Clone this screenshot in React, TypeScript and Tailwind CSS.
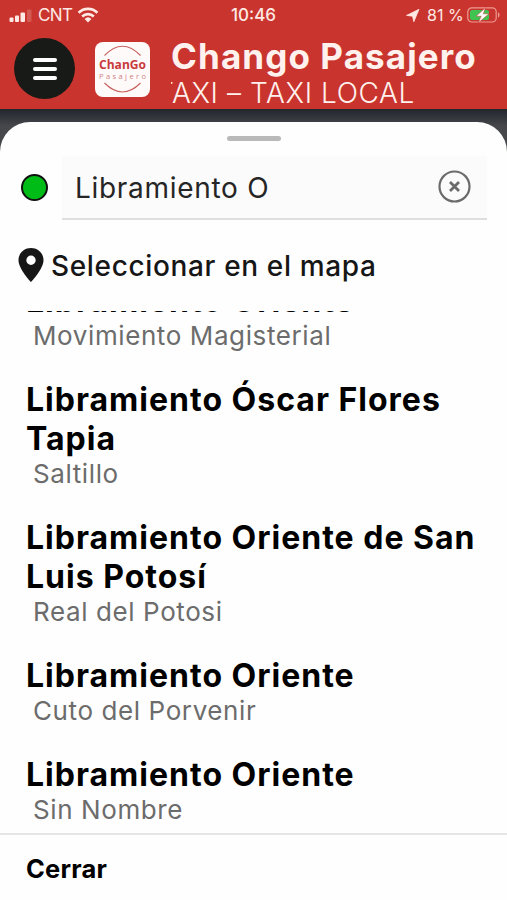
type Place = { lines: string[]; area: string };

const places: Place[] = [
  { lines: ["Libramiento Oriente"], area: "Movimiento Magisterial" },
  { lines: ["Libramiento Óscar Flores", "Tapia"], area: "Saltillo" },
  { lines: ["Libramiento Oriente de San", "Luis Potosí"], area: "Real del Potosi" },
  { lines: ["Libramiento Oriente"], area: "Cuto del Porvenir" },
  { lines: ["Libramiento Oriente"], area: "Sin Nombre" },
];

function StatusBar() {
  return (
    <div className="flex h-[30px] items-center pl-[9px] pr-[6px] text-[#ffe9e4]">
      <div className="flex w-[215px] items-center">
        <svg className="mt-[2px]" width="24" height="14" viewBox="0 0 24 14" fill="currentColor">
          <rect x="0.5" y="8.5" width="4" height="4.5" rx="1" />
          <rect x="6" y="6.5" width="4" height="6.5" rx="1" />
          <rect x="11.5" y="3.5" width="4.5" height="9.5" rx="1" />
          <rect x="18" y="0.5" width="4.5" height="12.5" rx="1" opacity="0.2" />
        </svg>
        <span className="ml-[5px] w-[35px] whitespace-nowrap pt-[2px] text-[17px] tracking-[-0.6px]">CNT</span>
        <svg className="ml-[4px]" width="22" height="16" viewBox="0 0 22 16" fill="none" stroke="currentColor" strokeWidth="2.7">
          <path d="M1.6 5.8a13.4 13.4 0 0 1 18.8 0" />
          <path d="M5.2 9.4a8.4 8.4 0 0 1 11.6 0" />
          <path d="M11 15.4 7.6 11.9a5 5 0 0 1 6.8 0Z" fill="currentColor" stroke="none" />
        </svg>
      </div>
      <span className="ml-[7px] w-[61px] whitespace-nowrap pt-[2px] text-[17px] font-medium">10:46</span>
      <svg className="ml-[114px]" width="14" height="13" viewBox="0 0 14 13" fill="currentColor">
        <path d="M13 .3 7.8 12.7 6.6 7.2.6 6.4Z" stroke="currentColor" strokeWidth="0.8" strokeLinejoin="round" />
      </svg>
      <span className="ml-[7px] w-[37px] whitespace-nowrap text-[16px]">81 %</span>
      <svg className="ml-[3px]" width="34" height="16" viewBox="0 0 34 16">
        <rect x="0.8" y="0.8" width="28.4" height="14.2" rx="4" fill="none" stroke="#ee9a92" strokeWidth="1.2" />
        <rect x="3" y="3" width="19" height="10" rx="2" fill="#3fc351" />
        <path d="M31 5.2c2 .8 2 4.6 0 5.4Z" fill="#ee9a92" />
        <path d="M18.5.8 9 9.2h5.2l-2.9 6.5L22 6.8h-5.7Z" fill="#fff" stroke="#c8352e" strokeWidth="0.5" />
      </svg>
    </div>
  );
}

function Logo() {
  return (
    <svg className="ml-[20px] shrink-0" width="55" height="55" viewBox="0 0 55 55">
      <rect width="55" height="55" rx="8" fill="#fffafa" />
      <g fill="none" stroke="#c9625f" strokeWidth="1.1">
        <path d="M9.5 13.5Q27.5-5 45.5 13.5" />
        <path d="M9.5 41Q27.5 59 45.5 41" />
      </g>
      <text x="4" y="27" textLength="47" lengthAdjust="spacingAndGlyphs" fontFamily="'Open Sans', sans-serif" fontSize="12.5" fontWeight="700" fill="#c83a3c">ChanGo</text>
      <text x="4" y="37" textLength="47" fontFamily="'Open Sans', sans-serif" fontSize="7.5" fill="#cf8284">Pasajero</text>
    </svg>
  );
}

function Header() {
  return (
    <header className="h-[109px] bg-[#c9352e]">
      <StatusBar />
      <div className="flex pl-[14px] pt-[8px]">
        <button className="flex h-[61px] w-[61px] shrink-0 flex-col items-center justify-center gap-[5px] rounded-full bg-[#181a17]">
          <span className="h-[4px] w-[24px] rounded-full bg-white" />
          <span className="h-[4px] w-[24px] rounded-full bg-white" />
          <span className="h-[4px] w-[24px] rounded-full bg-white" />
        </button>
        <div className="flex pt-[4px]">
          <Logo />
        </div>
        <div className="ml-[21px] text-[#fff1ed]">
          <h1 className="h-[38px] whitespace-nowrap text-[35px] font-bold leading-[37px] tracking-[1.1px]">Chango Pasajero</h1>
          <div className="flex h-[34px] w-[300px] overflow-hidden">
            <p className="-ml-[15px] whitespace-nowrap text-[28px] font-light leading-[34px] tracking-[0.6px]">TAXI – TAXI LOCAL</p>
          </div>
        </div>
      </div>
    </header>
  );
}

function SearchField() {
  return (
    <div className="flex h-[64px] items-center pl-[21px]">
      <span className="mb-[2px] h-[27px] w-[27px] rounded-full border-2 border-[#111] bg-[#00bc16]" />
      <div className="ml-[14px] flex h-full w-[425px] items-center justify-between border-b-2 border-[#dedede] bg-[#fbfbfb] pl-[13px] pr-[16px]">
        <span className="whitespace-nowrap pt-[2px] text-[28px] tracking-[0.7px] text-[#252525]">Libramiento O</span>
        <svg className="mb-[2px]" width="33" height="33" viewBox="0 0 33 33" fill="none" stroke="#6b6b6b">
          <circle cx="16.5" cy="16.5" r="15" strokeWidth="2.2" />
          <path d="m12 12 9 9m0-9-9 9" strokeWidth="2.8" />
        </svg>
      </div>
    </div>
  );
}

function PlaceItem({ place }: { place: Place }) {
  return (
    <li className="pb-[24px]">
      <div className="pt-[1px] text-[32px] font-bold leading-[39px] tracking-[1px] text-black">
        {place.lines.map((line) => (
          <div key={line} className="whitespace-nowrap">{line}</div>
        ))}
      </div>
      <div className="h-[35px] whitespace-nowrap pl-[7px] text-[26px] leading-[31px] tracking-[0.6px] text-[#6c6c6c]">{place.area}</div>
    </li>
  );
}

export default function App() {
  return (
    <div className="flex h-[900px] w-[507px] flex-col overflow-hidden bg-gradient-to-b from-[#20242b] from-12% to-[#45474b] to-14% font-['Inter',sans-serif]">
      <Header />
      <main className="mt-[13px] flex min-h-0 flex-1 flex-col rounded-t-[30px] bg-[#fefefe]">
        <div className="flex h-[34px] justify-center pt-[14px]">
          <span className="h-[5px] w-[54px] rounded-full bg-[#b9b9b9]" />
        </div>
        <SearchField />
        <div className="mt-[20px] flex h-[50px] items-center pl-[18px]">
          <svg width="26" height="34" viewBox="0 0 26 34" fill="#161616">
            <path fillRule="evenodd" d="M13 0C5.8 0 .5 5.3.5 12.2.5 21 13 34 13 34s12.5-13 12.5-21.8C25.5 5.3 20.2 0 13 0Zm0 7.6a4.7 4.7 0 1 1 0 9.4 4.7 4.7 0 0 1 0-9.4Z" />
          </svg>
          <span className="ml-[7px] whitespace-nowrap pt-[1px] text-[28px] font-medium tracking-[0.65px] text-[#161616]">Seleccionar en el mapa</span>
        </div>
        <div className="mt-[21px] h-[522px] shrink-0 overflow-hidden pl-[26px]">
          <ul className="-mt-[31px]">
            {places.map((place) => (
              <PlaceItem key={place.area} place={place} />
            ))}
          </ul>
        </div>
        <footer className="flex flex-1 items-center border-t-2 border-[#e5e5e5] pl-[26px] pt-[4px]">
          <button className="text-[25.5px] font-bold tracking-[0.2px] text-black">Cerrar</button>
        </footer>
      </main>
    </div>
  );
}
